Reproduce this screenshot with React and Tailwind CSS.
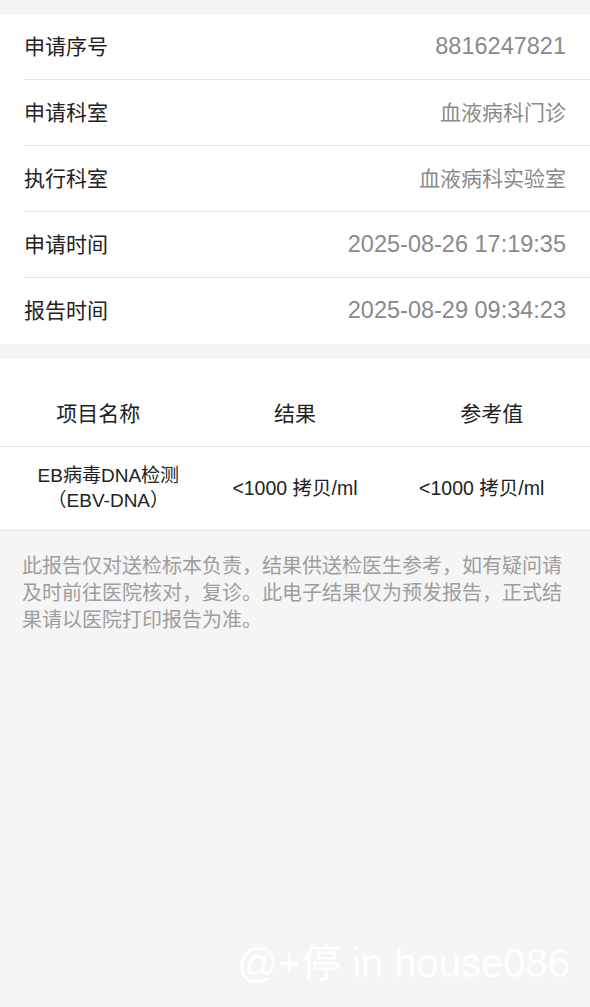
const info = [
  ['申请序号', '8816247821', true],
  ['申请科室', '血液病科门诊', false],
  ['执行科室', '血液病科实验室', false],
  ['申请时间', '2025-08-26 17:19:35', true],
  ['报告时间', '2025-08-29 09:34:23', true],
]

export default function App() {
  return (
    <div
      className="relative min-h-[1007px] bg-[#f5f5f5] pt-[14px]"
      style={{ fontFamily: '"Liberation Sans", "Noto Sans CJK SC", sans-serif' }}
    >
      <div className="bg-white">
        {info.map(([label, value, num], i) => (
          <div key={label} className="pl-6">
            <div
              className={`flex h-[66px] items-center justify-between pr-6 ${
                i < info.length - 1 ? 'border-b border-[#e6e6e6]' : ''
              }`}
            >
              <span className="text-[21px] text-[#222]">{label}</span>
              <span className={`${num ? 'text-[23.5px]' : 'text-[21px]'} text-[#8a8a8a]`}>{value}</span>
            </div>
          </div>
        ))}
      </div>

      <div className="mt-[15px] bg-white">
        <div className="grid h-[88px] grid-cols-3 items-center border-b border-[#e6e6e6] pt-[22px] text-center text-[21px] text-[#222]">
          <span>项目名称</span>
          <span>结果</span>
          <span>参考值</span>
        </div>
        <div className="grid h-[82px] grid-cols-3 items-center px-[15px] text-center text-[19px] leading-[25px] text-[#222]">
          <span>
            EB病毒DNA检测
            <br />
            （EBV-DNA）
          </span>
          <span className="text-[19.5px]">&lt;1000 拷贝/ml</span>
          <span className="text-[19.5px]">&lt;1000 拷贝/ml</span>
        </div>
      </div>

      <p className="mt-px border-t border-[#e6e6e6] px-[22px] pt-[22px] text-[20px] leading-[27px] text-[#9d9d9d]">
        此报告仅对送检标本负责，结果供送检医生参考，如有疑问请及时前往医院核对，复诊。此电子结果仅为预发报告，正式结果请以医院打印报告为准。
      </p>

      <div className="absolute bottom-[14px] right-[20px] text-[40px] text-white/90">
        @+停 in house086
      </div>
    </div>
  )
}
